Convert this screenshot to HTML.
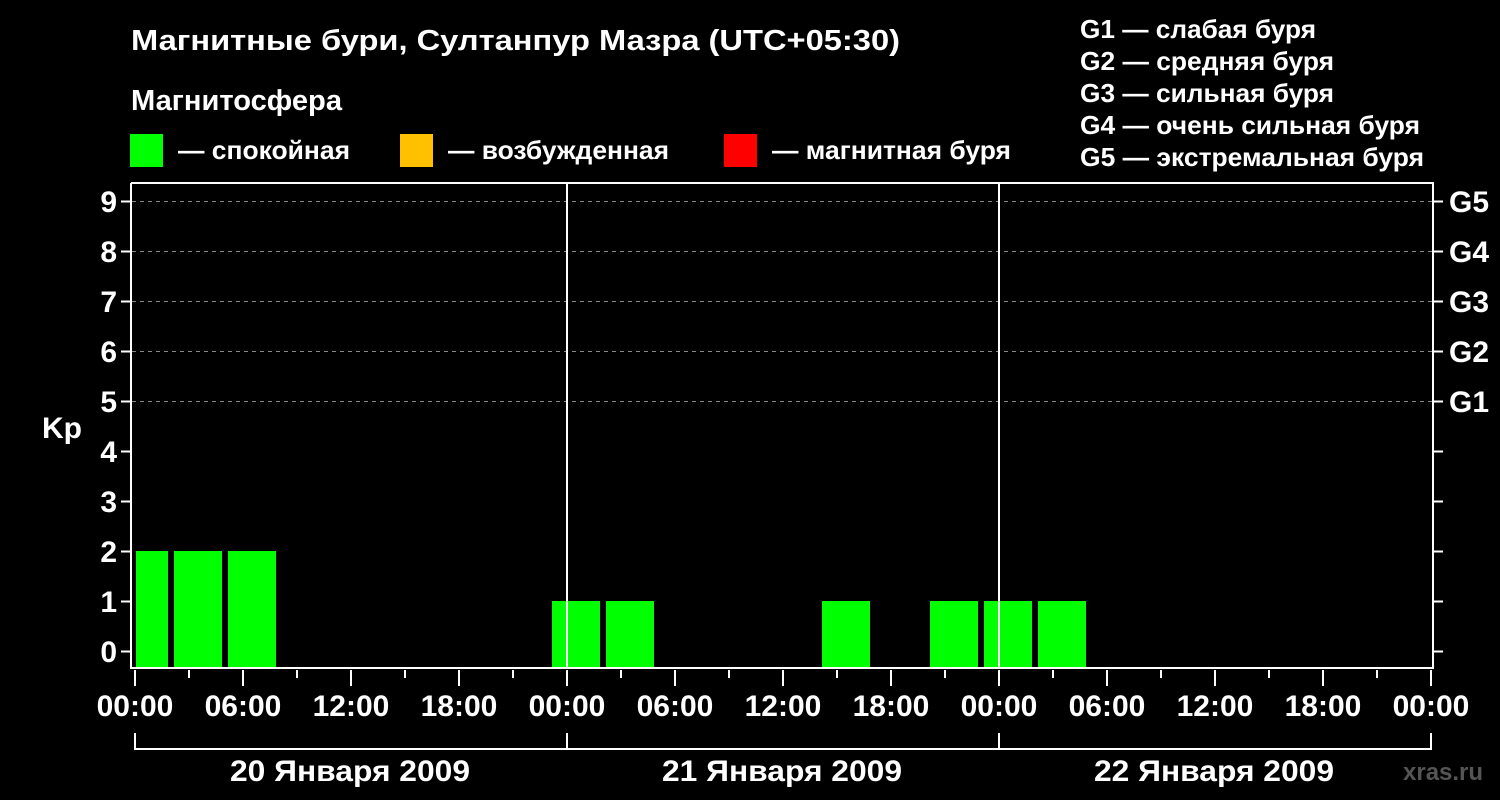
<!DOCTYPE html>
<html><head><meta charset="utf-8"><style>
html,body{margin:0;padding:0;background:#000;width:1500px;height:800px;overflow:hidden}
svg{display:block}
text{font-family:"Liberation Sans",sans-serif;font-weight:bold;fill:#fff}
</style></head><body>
<svg width="1500" height="800" viewBox="0 0 1500 800">
<rect width="1500" height="800" fill="#000"/>
<text x="131" y="50" font-size="29" textLength="769" lengthAdjust="spacingAndGlyphs">Магнитные бури, Султанпур Мазра (UTC+05:30)</text>
<text x="131" y="110" font-size="29" textLength="211" lengthAdjust="spacingAndGlyphs">Магнитосфера</text>
<rect x="130" y="134" width="33" height="33" fill="#00ff00"/>
<text x="178" y="159" font-size="26" textLength="172" lengthAdjust="spacingAndGlyphs">— спокойная</text>
<rect x="400" y="134" width="33" height="33" fill="#ffc000"/>
<text x="448" y="159" font-size="26" textLength="221" lengthAdjust="spacingAndGlyphs">— возбужденная</text>
<rect x="724" y="134" width="33" height="33" fill="#ff0000"/>
<text x="772" y="159" font-size="26" textLength="239" lengthAdjust="spacingAndGlyphs">— магнитная буря</text>
<g font-size="26">
<text x="1080" y="38" textLength="236" lengthAdjust="spacingAndGlyphs">G1 — слабая буря</text>
<text x="1080" y="70" textLength="254" lengthAdjust="spacingAndGlyphs">G2 — средняя буря</text>
<text x="1080" y="102" textLength="254" lengthAdjust="spacingAndGlyphs">G3 — сильная буря</text>
<text x="1080" y="134" textLength="340" lengthAdjust="spacingAndGlyphs">G4 — очень сильная буря</text>
<text x="1080" y="166" textLength="344" lengthAdjust="spacingAndGlyphs">G5 — экстремальная буря</text>
</g>
<g stroke="#888" stroke-width="1" stroke-dasharray="4,4">
<line x1="132" y1="201.5" x2="1432" y2="201.5"/>
<line x1="132" y1="251.5" x2="1432" y2="251.5"/>
<line x1="132" y1="301.5" x2="1432" y2="301.5"/>
<line x1="132" y1="351.5" x2="1432" y2="351.5"/>
<line x1="132" y1="401.5" x2="1432" y2="401.5"/>
</g>
<g fill="#00ff00">
<rect x="136" y="551" width="32" height="117"/>
<rect x="174" y="551" width="48" height="117"/>
<rect x="228" y="551" width="48" height="117"/>
<rect x="552" y="601" width="48" height="67"/>
<rect x="606" y="601" width="48" height="67"/>
<rect x="822" y="601" width="48" height="67"/>
<rect x="930" y="601" width="48" height="67"/>
<rect x="984" y="601" width="48" height="67"/>
<rect x="1038" y="601" width="48" height="67"/>
</g>
<g stroke="#fff" stroke-width="2" fill="none">
<polyline points="131,183 1433,183 1433,668 131,668 131,183"/>
<line x1="567" y1="183" x2="567" y2="668"/>
<line x1="999" y1="183" x2="999" y2="668"/>
<path d="M121 201.5h10M121 251.5h10M121 301.5h10M121 351.5h10M121 401.5h10M121 451.5h10M121 501.5h10M121 551.5h10M121 601.5h10M121 651.5h10"/>
<path d="M1433 201.5h10M1433 251.5h10M1433 301.5h10M1433 351.5h10M1433 401.5h10M1433 451.5h10M1433 501.5h10M1433 551.5h10M1433 601.5h10M1433 651.5h10"/>
<path d="M135 670v16M243 670v16M351 670v16M459 670v16M567 670v16M675 670v16M783 670v16M891 670v16M999 670v16M1107 670v16M1215 670v16M1323 670v16M1431 670v16"/>
<path d="M189 670v8M297 670v8M405 670v8M513 670v8M621 670v8M729 670v8M837 670v8M945 670v8M1053 670v8M1161 670v8M1269 670v8M1377 670v8"/>
<path d="M135 733v16H1431V733M567 733v16M999 733v16"/>
</g>
<g font-size="30" text-anchor="end">
<text x="117" y="212">9</text><text x="117" y="262">8</text><text x="117" y="312">7</text>
<text x="117" y="362">6</text><text x="117" y="412">5</text><text x="117" y="462">4</text>
<text x="117" y="512">3</text><text x="117" y="562">2</text><text x="117" y="612">1</text>
<text x="117" y="662">0</text>
</g>
<text x="42" y="438" font-size="30">Kp</text>
<g font-size="30">
<text x="1449" y="212">G5</text><text x="1449" y="262">G4</text><text x="1449" y="312">G3</text>
<text x="1449" y="362">G2</text><text x="1449" y="412">G1</text>
</g>
<g font-size="30" text-anchor="middle">
<text x="135" y="716">00:00</text><text x="243" y="716">06:00</text><text x="351" y="716">12:00</text>
<text x="459" y="716">18:00</text><text x="567" y="716">00:00</text><text x="675" y="716">06:00</text>
<text x="783" y="716">12:00</text><text x="891" y="716">18:00</text><text x="999" y="716">00:00</text>
<text x="1107" y="716">06:00</text><text x="1215" y="716">12:00</text><text x="1323" y="716">18:00</text>
<text x="1431" y="716">00:00</text>
</g>
<g font-size="30">
<text x="230" y="781" textLength="240" lengthAdjust="spacingAndGlyphs">20 Января 2009</text>
<text x="662" y="781" textLength="240" lengthAdjust="spacingAndGlyphs">21 Января 2009</text>
<text x="1094" y="781" textLength="240" lengthAdjust="spacingAndGlyphs">22 Января 2009</text>
</g>
<text x="1403" y="780" font-size="24" style="fill:#555">xras.ru</text>
</svg>
</body></html>
